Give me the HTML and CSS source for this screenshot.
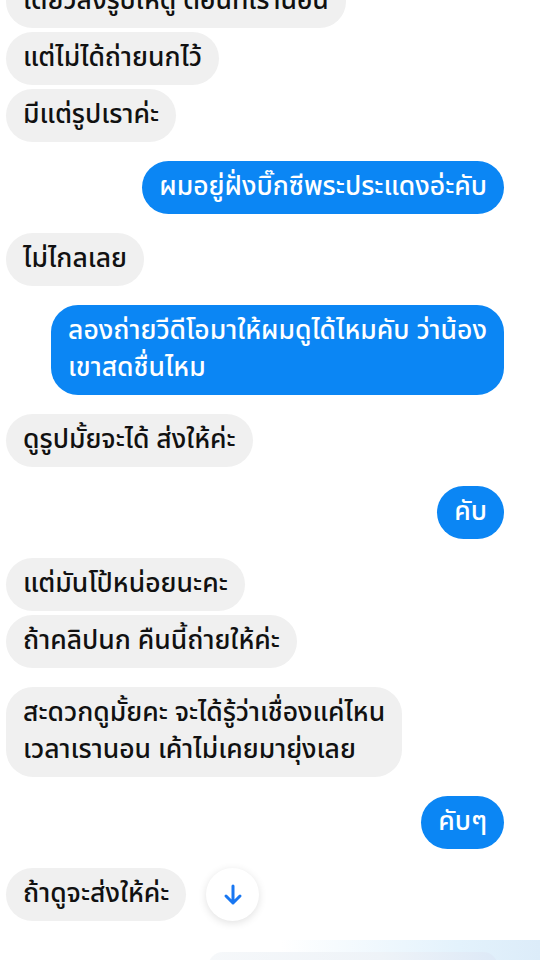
FILE: index.html
```html
<!DOCTYPE html>
<html lang="th">
<head>
<meta charset="utf-8">
<link rel="stylesheet" href="styles.css">
</head>
<body>
<div class="chat">
  <div class="msg in first">เดี๋ยวส่งรูปให้ดู ตอนที่เรานอน</div>
  <div class="msg in cont">แต่ไม่ได้ถ่ายนกไว้</div>
  <div class="msg in cont">มีแต่รูปเราค่ะ</div>
  <div class="msg out">ผมอยู่ฝั่งบิ๊กซีพระประแดงอ่ะคับ</div>
  <div class="msg in">ไม่ไกลเลย</div>
  <div class="msg out">ลองถ่ายวีดีโอมาให้ผมดูได้ไหมคับ ว่าน้อง<br>เขาสดชื่นไหม</div>
  <div class="msg in">ดูรูปมั้ยจะได้ ส่งให้ค่ะ</div>
  <div class="msg out">คับ</div>
  <div class="msg in">แต่มันโป้หน่อยนะคะ</div>
  <div class="msg in cont">ถ้าคลิปนก คืนนี้ถ่ายให้ค่ะ</div>
  <div class="msg in">สะดวกดูมั้ยคะ จะได้รู้ว่าเชื่องแค่ไหน<br>เวลาเรานอน เค้าไม่เคยมายุ่งเลย</div>
  <div class="msg out">คับๆ</div>
  <div class="row">
    <div class="msg in">ถ้าดูจะส่งให้ค่ะ</div>
    <div class="scroll-btn">
      <svg width="24" height="24" viewBox="0 0 24 24" fill="none" stroke="#1877f2" stroke-width="3" stroke-linecap="round" stroke-linejoin="round"><path d="M12 3v17M5 13l7 7 7-7"/></svg>
    </div>
  </div>
</div>
<div class="composer">
  <div class="pill"></div>
</div>
</body>
</html>
```
FILE: styles.css
```css
html, body {
  margin: 0;
  padding: 0;
  background: #ffffff;
}
body {
  width: 540px;
  height: 960px;
  overflow: hidden;
  position: relative;
  font-family: "Noto Sans Thai", "Noto Sans", "DejaVu Sans", sans-serif;
}
.chat {
  display: flex;
  flex-direction: column;
  align-items: flex-start;
  margin-top: -25px;
}
.msg {
  font-size: 26.5px;
  font-weight: 500;
  line-height: 37px;
  padding: 8px 17px;
  border-radius: 27px;
  margin-top: 19px;
  box-sizing: border-box;
  white-space: nowrap;
}
.msg.first {
  margin-top: 0;
}
.msg.cont {
  margin-top: 4px;
}
.in {
  background: #f0f0f0;
  color: #111111;
  margin-left: 6px;
}
.out {
  background: #0b86f4;
  color: #ffffff;
  align-self: flex-end;
  margin-right: 36px;
}
.row {
  display: flex;
  align-items: center;
  gap: 20px;
  margin-top: 19px;
}
.row .msg {
  margin-top: 0;
}
.scroll-btn {
  width: 53px;
  height: 53px;
  border-radius: 50%;
  background: #ffffff;
  box-shadow: 0 2px 8px rgba(0,0,0,0.12);
  display: flex;
  align-items: center;
  justify-content: center;
}
.composer {
  position: absolute;
  left: 0;
  right: 0;
  top: 940px;
  height: 20px;
  background: linear-gradient(90deg, rgba(255,255,255,0) 0%, rgba(255,255,255,0) 52%, #e3f2fc 85%, #dcecf9 100%);
}
.pill {
  position: absolute;
  left: 208px;
  top: 12px;
  width: 290px;
  height: 30px;
  border-radius: 15px;
  background: linear-gradient(90deg, #f6f8fa 0%, #eef3f8 60%, #dde9f7 100%);
}
```
